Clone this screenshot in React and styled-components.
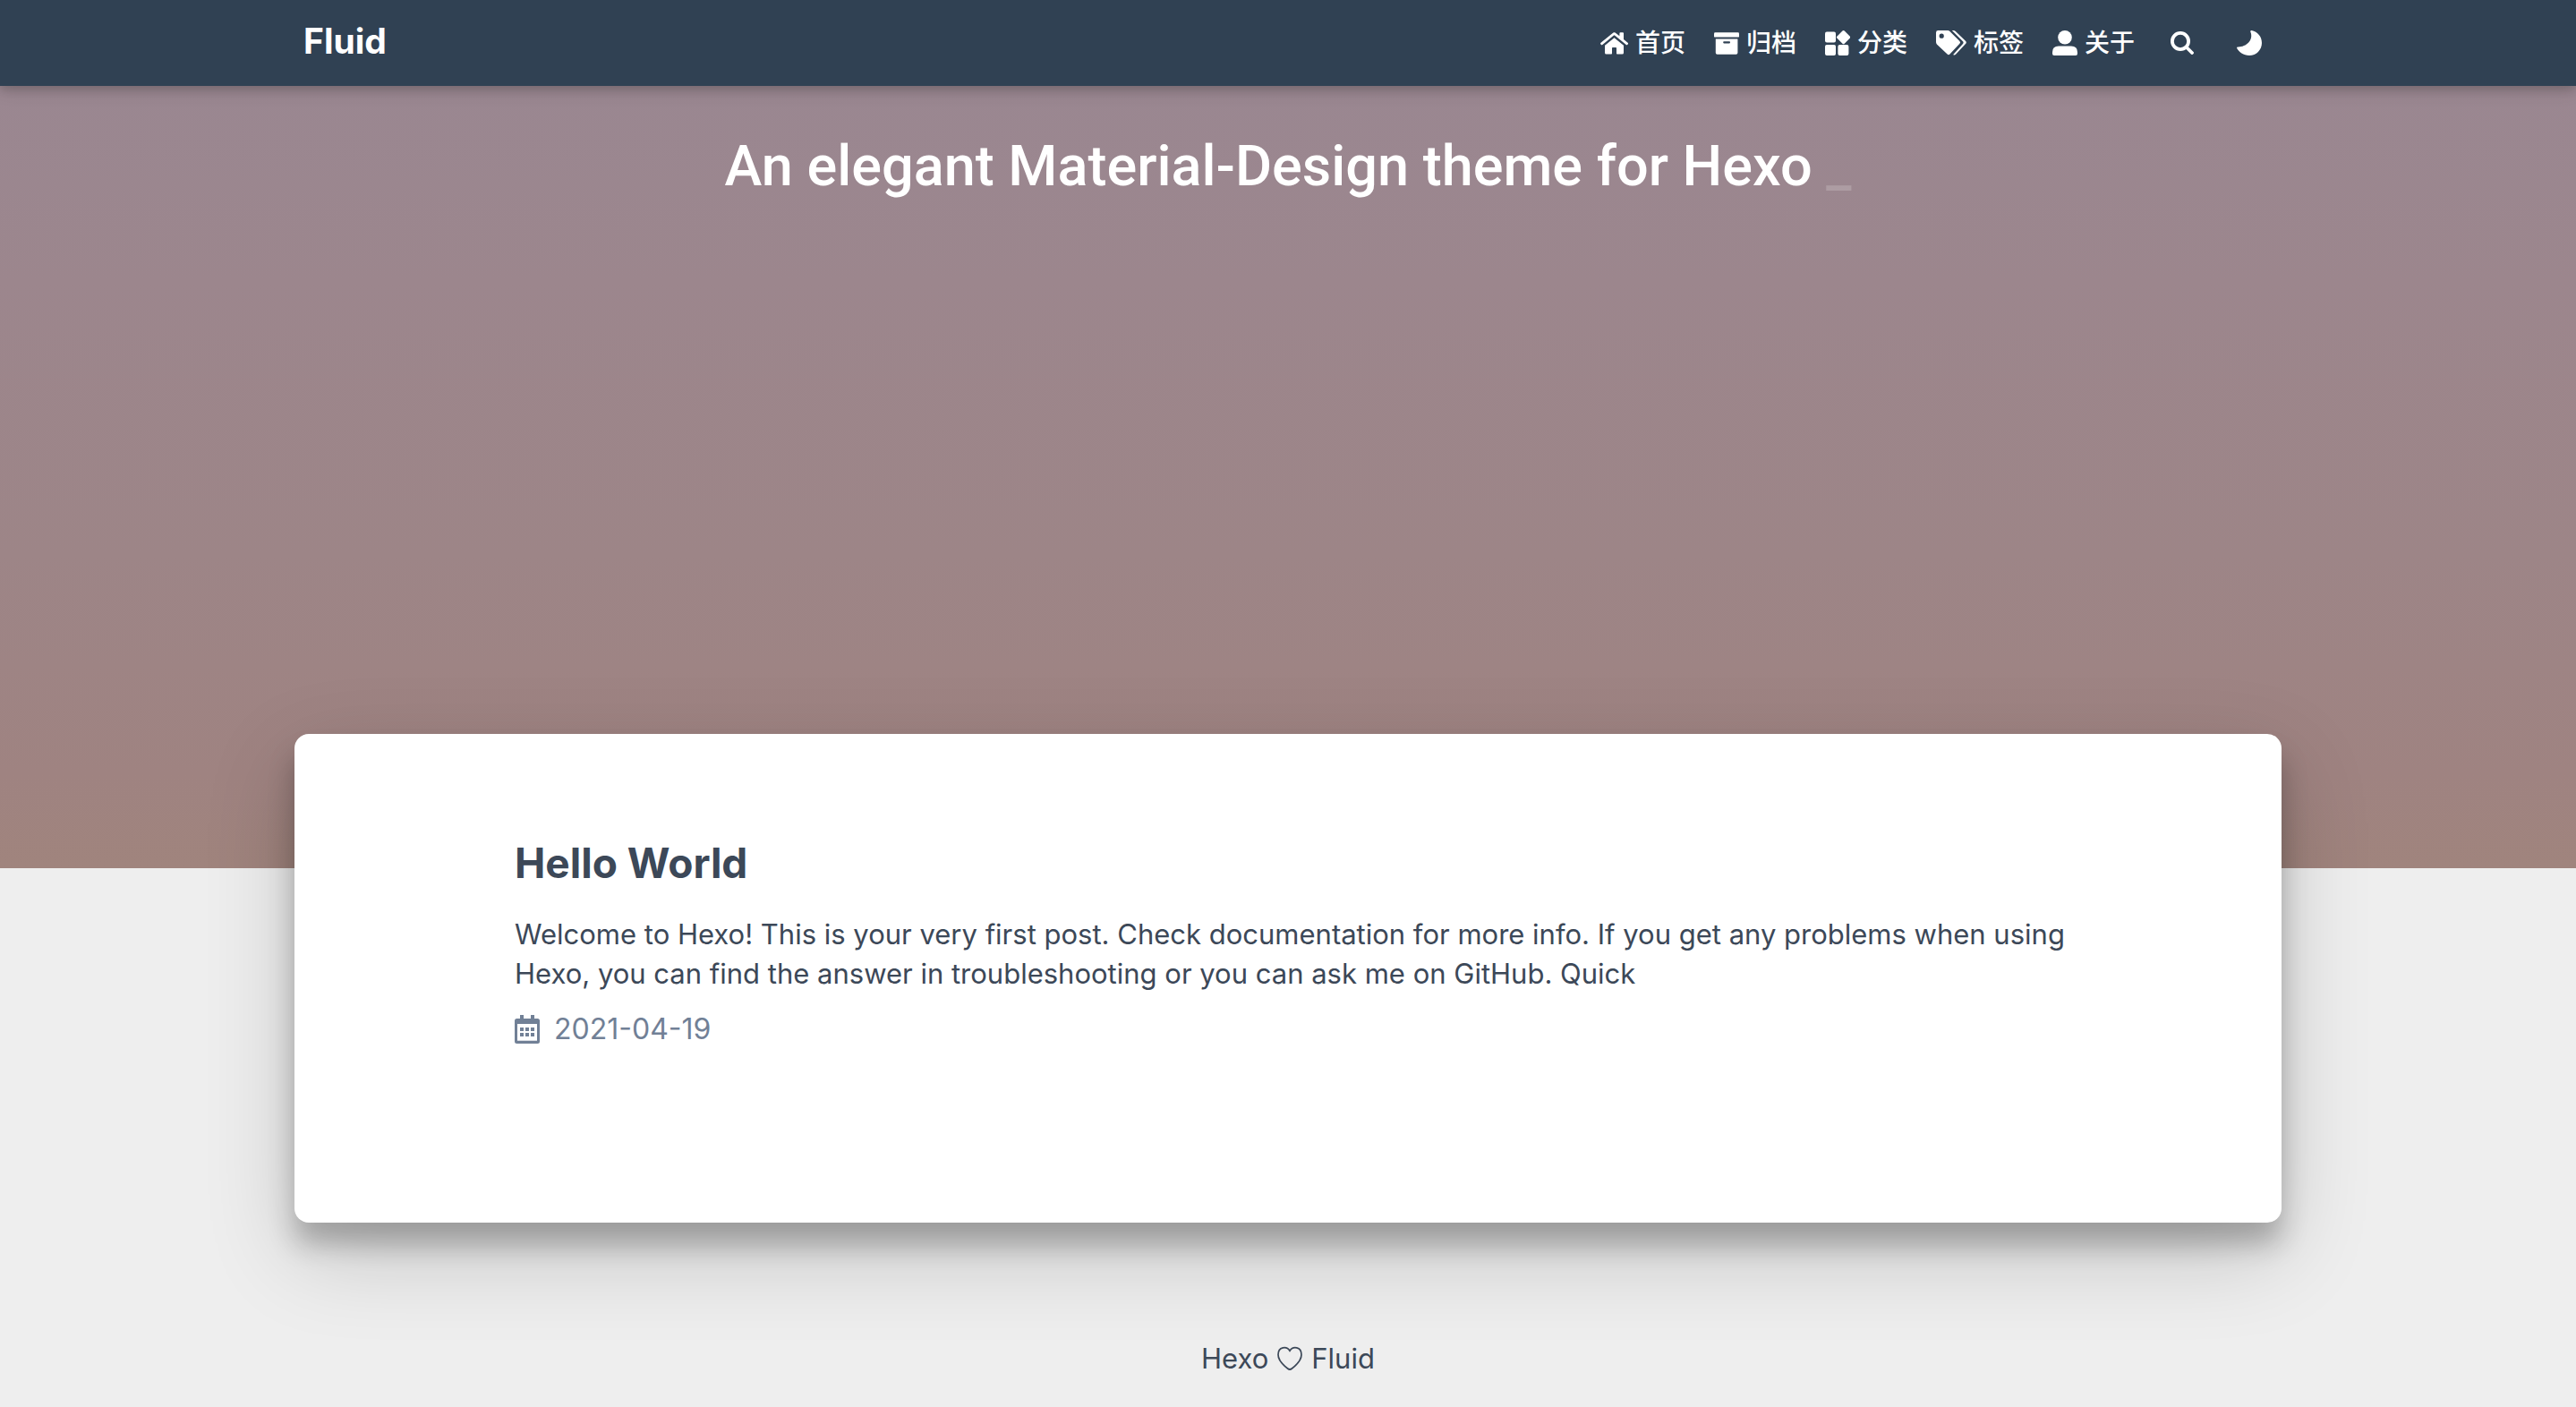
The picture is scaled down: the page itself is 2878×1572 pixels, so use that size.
import React from 'react';
import styled, { createGlobalStyle } from 'styled-components';

const GlobalStyle = createGlobalStyle`
  * { box-sizing: border-box; }
  body {
    margin: 0;
    background: #eeeeee;
    color: #3c4858;
    font-family: Inter, "Noto Sans CJK SC", sans-serif;
    font-size: 31px;
    line-height: 44px;
  }
  a { color: inherit; text-decoration: none; }
`;

const Navbar = styled.nav`
  position: relative;
  z-index: 1;
  background: #304153;
  color: #ffffff;
  box-shadow: 0 4px 10px rgba(0, 0, 0, 0.16), 0 4px 20px rgba(0, 0, 0, 0.12);
`;

const NavInner = styled.div`
  display: flex;
  align-items: center;
  justify-content: space-between;
  width: 100%;
  max-width: 2220px;
  height: 96px;
  margin: 0 auto;
  padding: 0 14px 0 10px;
`;

const Brand = styled.a`
  padding-bottom: 4px;
  font-size: 39px;
  font-weight: 700;
`;

const Menu = styled.ul`
  display: flex;
  align-items: center;
  gap: 32px;
  margin: 0;
  padding: 0;
  list-style: none;
`;

const MenuLink = styled.a`
  display: flex;
  align-items: center;
  gap: 8px;
  font-size: 28px;
  font-weight: 500;
`;

const MenuButton = styled.button`
  display: flex;
  align-items: center;
  margin: 0;
  padding: 0 8px;
  border: 0;
  background: none;
  color: inherit;
  cursor: pointer;
`;

const Icon = styled.svg`
  display: block;
  flex: none;
  fill: currentColor;
`;

const Banner = styled.header`
  display: flex;
  justify-content: center;
  min-height: 874px;
  padding: 50px 32px 0;
  background: linear-gradient(#9a8791 0%, #9c868d 25%, #9d8587 60%, #9f8381 88%, #a0847d 100%);
  color: #ffffff;
`;

const Slogan = styled.h1`
  margin: 0;
  font-family: Roboto, Inter, sans-serif;
  font-size: 63px;
  font-weight: 500;
  line-height: 80px;
  text-align: center;
`;

const Cursor = styled.span`
  opacity: 0.18;
`;

const Board = styled.main`
  position: relative;
  width: 100%;
  max-width: 2220px;
  margin: -150px auto 0;
  padding: 110px 240px 194px 246px;
  border-radius: 16px;
  background: #ffffff;
  box-shadow: 0 24px 30px rgba(0, 0, 0, 0.24), 0 34px 100px rgba(0, 0, 0, 0.19);
`;

const PostTitle = styled.h2`
  margin: 0 0 24px;
  font-size: 46px;
  font-weight: 700;
  line-height: 68px;
`;

const Excerpt = styled.p`
  margin: 0 0 18px;
`;

const Meta = styled.div`
  display: flex;
  align-items: center;
  gap: 16px;
  color: #718096;
  font-size: 32px;
`;

const Footer = styled.footer`
  display: flex;
  align-items: center;
  justify-content: center;
  gap: 10px;
  padding: 130px 32px 32px;
`;

const HomeIcon = () => (
  <Icon width="32" height="28" viewBox="0 0 32 28">
    <path d="M16.4 2.2 Q17 2 17.6 2.4 L22.4 6.3 V3.2 Q22.4 2.2 23.4 2.2 H26 Q27 2.2 27 3.2 V10 L31.6 13.8 Q32.4 14.5 31.8 15.3 L31.2 16 Q30.6 16.7 29.8 16 L17.3 5.7 Q16.5 5 15.7 5.7 L3.3 16 Q2.5 16.7 1.9 16 L1.3 15.3 Q.7 14.5 1.5 13.8 L15.4 2.5 Q15.9 2.1 16.4 2.2Z" />
    <path d="M16.5 8.2 L27 16.8 V25 Q27 26.6 25.4 26.6 H19.8 Q19 26.6 19 25.8 V19.8 Q19 19 18.2 19 H14.8 Q14 19 14 19.8 V25.8 Q14 26.6 13.2 26.6 H7.6 Q6 26.6 6 25 V16.8Z" />
  </Icon>
);

const ArchiveIcon = () => (
  <Icon width="28" height="28" viewBox="0 0 28 28">
    <path d="M1.3 2.2 H26.7 Q28 2.2 28 3.5 V6.4 Q28 7.6 26.7 7.6 H1.3 Q0 7.6 0 6.4 V3.5 Q0 2.2 1.3 2.2Z" />
    <path fillRule="evenodd" d="M1.8 9.4 H26.4 V25 Q26.4 26.8 24.6 26.8 H3.6 Q1.8 26.8 1.8 25Z M11 12.2 Q10.2 12.2 10.2 13.3 Q10.2 14.4 11 14.4 H17.2 Q18 14.4 18 13.3 Q18 12.2 17.2 12.2Z" />
  </Icon>
);

const CategoryIcon = () => (
  <Icon width="28" height="30" viewBox="0 0 28 30">
    <rect x="0" y="2.6" width="12" height="12" rx="2" />
    <rect x="0" y="17" width="12" height="12" rx="2" />
    <rect x="14.4" y="17" width="12" height="12" rx="2" />
    <rect x="14.8" y="2.8" width="11.6" height="11.6" rx="1.6" transform="rotate(45 20.6 8.6)" />
  </Icon>
);

const TagsIcon = () => (
  <Icon width="34" height="28" viewBox="0 0 34 28">
    <path fillRule="evenodd" d="M2.4 0 H13 Q14.4 0 15.4 1 L26.4 12 Q27.8 13.4 26.4 14.8 L15.4 26.6 Q14 28 12.6 26.6 L.9 15.4 Q0 14.4 0 13 V2.4 Q0 0 2.4 0Z M6.2 3.6 A2.6 2.6 0 1 0 6.2 8.8 A2.6 2.6 0 1 0 6.2 3.6Z" />
    <path d="M17.8 0 H19.2 Q20.8 0 21.8 1 L33.2 12 Q34.4 13.4 33.2 14.8 L22 26.8 Q20.6 28.2 19.2 27 L30 15 Q31.2 13.4 30 12.2Z" />
  </Icon>
);

const UserIcon = () => (
  <Icon width="28" height="28" viewBox="0 0 28 28">
    <circle cx="14" cy="7.8" r="7.8" />
    <path d="M7 17.4 H21 Q28 17.4 28 24.2 V26 Q28 28 26 28 H2 Q0 28 0 26 V24.2 Q0 17.4 7 17.4Z" />
  </Icon>
);

const SearchIcon = () => (
  <Icon width="26" height="26" viewBox="0 0 26 26">
    <g fill="none" stroke="currentColor" strokeWidth="3.8" strokeLinecap="round">
      <circle cx="11" cy="11" r="9.1" />
      <path d="M18 18 L24 24" />
    </g>
  </Icon>
);

const MoonIcon = () => (
  <Icon width="28" height="28" viewBox="0 0 28 28">
    <path d="M16.6 0 C23.4 1.4 28 7 28 14 C28 21.8 21.8 28 14 28 C7.6 28 2.2 24.4 0 19.6 Q0 18.2 1.4 18.4 C10 18.6 19.4 11 15.2 1.2 Q15.2 0 16.6 0Z" />
  </Icon>
);

const CalendarIcon = () => (
  <Icon width="28" height="32" viewBox="0 0 28 32">
    <path fillRule="evenodd" d="M6 0 H10 V4 H18 V0 H22 V4 H25.5 Q28 4 28 6.5 V29.5 Q28 32 25.5 32 H2.5 Q0 32 0 29.5 V6.5 Q0 4 2.5 4 H6Z M3 10 V28.8 H25 V10Z" />
    <path d="M6 14h4v4H6z M12 14h4v4h-4z M18 14h4v4h-4z M6 20h4v4H6z M12 20h4v4h-4z M18 20h4v4h-4z" />
  </Icon>
);

const HeartIcon = () => (
  <Icon width="28" height="28" viewBox="0 0 28 28">
    <path
      fill="none"
      stroke="currentColor"
      strokeWidth="1.7"
      d="M14 5.2 C10.6 -0.4 1 .4 1 9.6 C1 16 6.4 21 11.6 25 Q14 27 16.4 25 C21.6 21 27 16 27 9.6 C27 .4 17.4 -0.4 14 5.2Z"
    />
  </Icon>
);

const menu = [
  { label: '首页', icon: HomeIcon },
  { label: '归档', icon: ArchiveIcon },
  { label: '分类', icon: CategoryIcon },
  { label: '标签', icon: TagsIcon },
  { label: '关于', icon: UserIcon },
];

export default function App() {
  return (
    <>
      <GlobalStyle />
      <Navbar>
        <NavInner>
          <Brand href="#">Fluid</Brand>
          <Menu>
            {menu.map(({ label, icon: Glyph }) => (
              <li key={label}>
                <MenuLink href="#">
                  <Glyph />
                  {label}
                </MenuLink>
              </li>
            ))}
            <li>
              <MenuButton type="button" aria-label="搜索"><SearchIcon /></MenuButton>
            </li>
            <li>
              <MenuButton type="button" aria-label="切换主题"><MoonIcon /></MenuButton>
            </li>
          </Menu>
        </NavInner>
      </Navbar>
      <Banner>
        <Slogan>
          An elegant Material-Design theme for Hexo <Cursor>_</Cursor>
        </Slogan>
      </Banner>
      <Board>
        <article>
          <PostTitle><a href="#">Hello World</a></PostTitle>
          <Excerpt>
            Welcome to Hexo! This is your very first post. Check documentation for more info. If you get any problems when using Hexo, you can find the answer in troubleshooting or you can ask me on GitHub. Quick
          </Excerpt>
          <Meta>
            <CalendarIcon />
            <time dateTime="2021-04-19">2021-04-19</time>
          </Meta>
        </article>
      </Board>
      <Footer>
        <a href="#">Hexo</a>
        <HeartIcon />
        <a href="#">Fluid</a>
      </Footer>
    </>
  );
}
